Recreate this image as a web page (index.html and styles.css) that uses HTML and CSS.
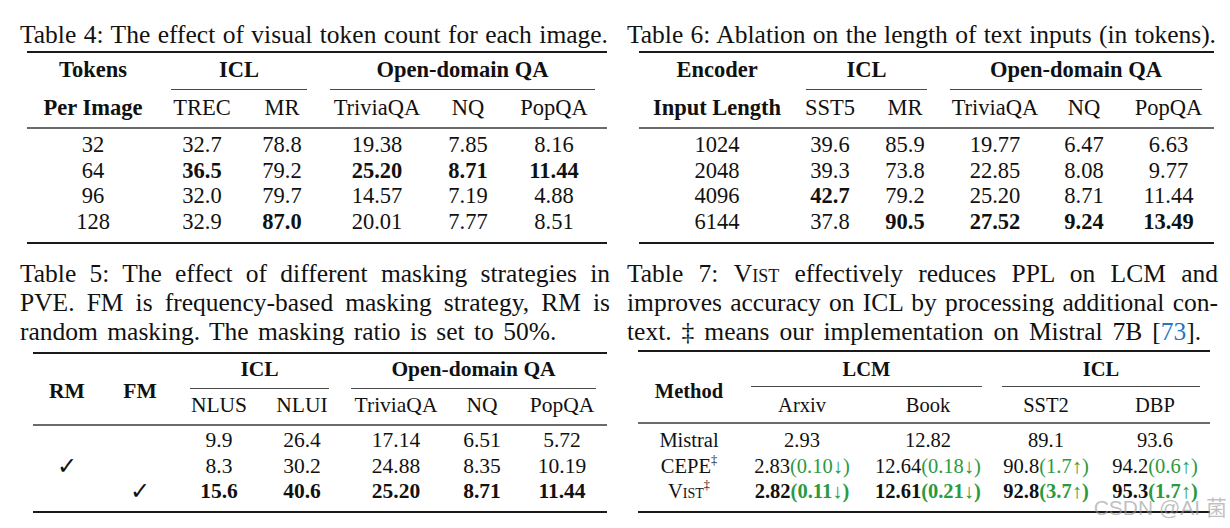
FILE: index.html
```html
<!DOCTYPE html>
<html lang="en">
<head>
<meta charset="utf-8">
<title>Tables 4–7</title>
<link rel="stylesheet" href="styles.css">
</head>
<body>
<main class="page">
  <section class="col col-left">
    <figure class="fig fig4">
      <p class="cap one">Table 4: The effect of visual token count for each image.</p>
      <table class="tbl tbl-a t4">
        <colgroup><col><col><col><col><col><col></colgroup>
        <thead>
          <tr class="r1">
            <th>Tokens</th>
            <th colspan="2"><span class="cmid c4a">ICL</span></th>
            <th colspan="3"><span class="cmid c4b">Open-domain QA</span></th>
          </tr>
          <tr class="r2">
            <th>Per Image</th>
            <th class="n">TREC</th><th class="n">MR</th>
            <th class="n">TriviaQA</th><th class="n">NQ</th><th class="n">PopQA</th>
          </tr>
        </thead>
        <tbody>
          <tr><td>32</td><td>32.7</td><td>78.8</td><td>19.38</td><td>7.85</td><td>8.16</td></tr>
          <tr><td>64</td><td><b>36.5</b></td><td>79.2</td><td><b>25.20</b></td><td><b>8.71</b></td><td><b>11.44</b></td></tr>
          <tr><td>96</td><td>32.0</td><td>79.7</td><td>14.57</td><td>7.19</td><td>4.88</td></tr>
          <tr><td>128</td><td>32.9</td><td><b>87.0</b></td><td>20.01</td><td>7.77</td><td>8.51</td></tr>
        </tbody>
      </table>
    </figure>

    <figure class="fig fig5">
      <div class="cap multi">
        <span class="ln">Table 5: The effect of different masking strategies in</span>
        <span class="ln">PVE. FM is frequency-based masking strategy, RM is</span>
        <span class="ln last">random masking. The masking ratio is set to 50%.</span>
      </div>
      <table class="tbl tbl-b t5">
        <colgroup><col><col><col><col><col><col><col></colgroup>
        <thead>
          <tr class="r1">
            <th rowspan="2" class="span2">RM</th>
            <th rowspan="2" class="span2">FM</th>
            <th colspan="2"><span class="cmid c5a">ICL</span></th>
            <th colspan="3"><span class="cmid c5b">Open-domain QA</span></th>
          </tr>
          <tr class="r2">
            <th class="n">NLUS</th><th class="n">NLUI</th>
            <th class="n">TriviaQA</th><th class="n">NQ</th><th class="n">PopQA</th>
          </tr>
        </thead>
        <tbody>
          <tr><td></td><td></td><td>9.9</td><td>26.4</td><td>17.14</td><td>6.51</td><td>5.72</td></tr>
          <tr><td class="chk">✓</td><td></td><td>8.3</td><td>30.2</td><td>24.88</td><td>8.35</td><td>10.19</td></tr>
          <tr><td></td><td class="chk">✓</td><td><b>15.6</b></td><td><b>40.6</b></td><td><b>25.20</b></td><td><b>8.71</b></td><td><b>11.44</b></td></tr>
        </tbody>
      </table>
    </figure>
  </section>

  <section class="col col-right">
    <figure class="fig fig6">
      <p class="cap one">Table 6: Ablation on the length of text inputs (in tokens).</p>
      <table class="tbl tbl-a t6">
        <colgroup><col><col><col><col><col><col></colgroup>
        <thead>
          <tr class="r1">
            <th>Encoder</th>
            <th colspan="2"><span class="cmid c6a">ICL</span></th>
            <th colspan="3"><span class="cmid c6b">Open-domain QA</span></th>
          </tr>
          <tr class="r2">
            <th>Input Length</th>
            <th class="n">SST5</th><th class="n">MR</th>
            <th class="n">TriviaQA</th><th class="n">NQ</th><th class="n">PopQA</th>
          </tr>
        </thead>
        <tbody>
          <tr><td>1024</td><td>39.6</td><td>85.9</td><td>19.77</td><td>6.47</td><td>6.63</td></tr>
          <tr><td>2048</td><td>39.3</td><td>73.8</td><td>22.85</td><td>8.08</td><td>9.77</td></tr>
          <tr><td>4096</td><td><b>42.7</b></td><td>79.2</td><td>25.20</td><td>8.71</td><td>11.44</td></tr>
          <tr><td>6144</td><td>37.8</td><td><b>90.5</b></td><td><b>27.52</b></td><td><b>9.24</b></td><td><b>13.49</b></td></tr>
        </tbody>
      </table>
    </figure>

    <figure class="fig fig7">
      <div class="cap multi">
        <span class="ln">Table 7: <span class="sc">Vist</span> effectively reduces PPL on LCM and</span>
        <span class="ln">improves accuracy on ICL by processing additional con-</span>
        <span class="ln last wide">text. ‡ means our implementation on Mistral 7B [<a class="ref">73</a>].</span>
      </div>
      <table class="tbl tbl-c t7">
        <colgroup><col><col><col><col><col></colgroup>
        <thead>
          <tr class="r1">
            <th rowspan="2" class="span2">Method</th>
            <th colspan="2"><span class="cmid c7a">LCM</span></th>
            <th colspan="2"><span class="cmid c7b">ICL</span></th>
          </tr>
          <tr class="r2">
            <th class="n">Arxiv</th><th class="n">Book</th>
            <th class="n">SST2</th><th class="n">DBP</th>
          </tr>
        </thead>
        <tbody>
          <tr><td>Mistral</td><td>2.93</td><td>12.82</td><td>89.1</td><td>93.6</td></tr>
          <tr><td>CEPE<sup>‡</sup></td><td>2.83<span class="g">(0.10↓)</span></td><td>12.64<span class="g">(0.18↓)</span></td><td>90.8<span class="g">(1.7↑)</span></td><td>94.2<span class="g">(0.6↑)</span></td></tr>
          <tr><td><span class="sc">Vist</span><sup>‡</sup></td><td><b>2.82<span class="g">(0.11↓)</span></b></td><td><b>12.61<span class="g">(0.21↓)</span></b></td><td><b>92.8<span class="g">(3.7↑)</span></b></td><td><b>95.3<span class="g">(1.7↑)</span></b></td></tr>
        </tbody>
      </table>
    </figure>
  </section>

  <div class="wm">CSDN @AI 菌</div>
</main>
</body>
</html>
```

FILE: styles.css
```css
* { box-sizing: border-box; }

html, body {
  margin: 0;
  padding: 0;
  background: #fff;
}

body {
  font-family: "Liberation Serif", "Times New Roman", "Noto Sans CJK SC", serif;
  color: #111;
  width: 1230px;
  height: 528px;
  overflow: hidden;
}

.page {
  position: relative;
  display: grid;
  grid-template-columns: 590px 591px;
  column-gap: 17px;
  padding: 20px 0 0 20px;
  height: 528px;
}

.col {
  display: flex;
  flex-direction: column;
}

.fig {
  margin: 0;
}

/* captions */
.cap {
  margin: 0;
  font-size: 25.5px;
  line-height: 29px;
  text-align: justify;
}
.cap.one {
  text-align-last: justify;
  margin-right: 2px;
}
.cap .ln {
  display: block;
  text-align: justify;
  text-align-last: justify;
}
.cap .ln.last {
  text-align-last: left;
  word-spacing: 3px;
}
.cap .ln.last.wide {
  word-spacing: 3.6px;
}
.sc {
  font-variant: small-caps;
}
.ref {
  color: #1f77c4;
  text-decoration: none;
}

.fig5 { margin-top: 15px; }
.fig7 { margin-top: 15px; }

/* tables */
.tbl {
  border-collapse: collapse;
  table-layout: fixed;
  border-top: 2px solid #1a1a1a;
  border-bottom: 2px solid #1a1a1a;
  font-size: 22.5px;
  line-height: 25.5px;
  text-align: center;
}
.tbl thead {
  border-bottom: 2px solid #6a6a6a;
}
.tbl th, .tbl td {
  padding: 0;
  text-align: center;
  white-space: nowrap;
}
.tbl th {
  font-weight: bold;
  vertical-align: top;
}
.tbl th.n {
  font-weight: normal;
}
.tbl th.span2 {
  vertical-align: middle;
}
.tbl b {
  font-weight: bold;
}
.cmid {
  display: block;
  border-bottom: 1px solid #4a4a4a;
}
.g {
  color: #2b9a3e;
}
sup {
  font-size: 0.6em;
  line-height: 0;
  vertical-align: 0.7em;
}
.chk {
  font-family: "DejaVu Sans", sans-serif;
  font-size: 24px;
  font-weight: bold;
}

/* Table A : tables 4 and 6 */
.tbl-a { margin-top: 2px; }
.tbl-a .r1 th { padding-top: 4px; padding-bottom: 7.5px; }
.tbl-a .r1 th .cmid { padding-bottom: 6.5px; margin-bottom: -7.5px; }
.tbl-a .r2 th { padding-top: 5px; padding-bottom: 6.5px; }
.tbl-a tbody tr:first-child td { padding-top: 3px; }
.tbl-a tbody tr:last-child td { padding-bottom: 8px; }

/* Table B : table 5 */
.tbl-b { margin-top: 6px; font-size: 21.5px; }
.tbl-b .r1 th { padding-top: 3px; }
.tbl-b .r1 th .cmid { padding-bottom: 5.5px; }
.tbl-b .r2 th { padding-top: 4px; padding-bottom: 5.5px; }
.tbl-b th.span2 { padding-top: 6px; padding-bottom: 0; }
.tbl-b tbody tr:first-child td { padding-top: 2px; }
.tbl-b tbody tr:last-child td { padding-bottom: 6.5px; }

/* Table C : table 7 */
.tbl-c { margin-top: 4px; font-size: 20.5px; }
.tbl-c .r1 th { padding-top: 5px; }
.tbl-c .r1 th .cmid { padding-bottom: 3.5px; }
.tbl-c .r2 th { padding-top: 6px; padding-bottom: 3.5px; }
.tbl-c th.span2 { padding-top: 10px; padding-bottom: 0; }
.tbl-c tbody tr:first-child td { padding-top: 4px; }
.tbl-c tbody tr:last-child td { padding-bottom: 6.5px; }

/* Table 4 geometry */
.t4 { width: 580px; margin-left: 7px; }
.t4 col:nth-child(1) { width: 132px; }
.t4 col:nth-child(2) { width: 86px; }
.t4 col:nth-child(3) { width: 74px; }
.t4 col:nth-child(4) { width: 116px; }
.t4 col:nth-child(5) { width: 66px; }
.t4 col:nth-child(6) { width: 106px; }
.c4a { margin: 0 12px; }
.c4b { margin: 0 12px 0 11px; }

/* Table 5 geometry */
.t5 { width: 574px; margin-left: 13px; }
.t5 col:nth-child(1) { width: 68px; }
.t5 col:nth-child(2) { width: 78px; }
.t5 col:nth-child(3) { width: 80px; }
.t5 col:nth-child(4) { width: 86px; }
.t5 col:nth-child(5) { width: 102px; }
.t5 col:nth-child(6) { width: 70px; }
.t5 col:nth-child(7) { width: 90px; }
.c5a { margin: 0 16px 0 11px; }
.c5b { margin: 0 11px 0 6px; }

/* Table 6 geometry */
.t6 { width: 575px; margin-left: 12px; }
.t6 col:nth-child(1) { width: 156px; }
.t6 col:nth-child(2) { width: 70px; }
.t6 col:nth-child(3) { width: 80px; }
.t6 col:nth-child(4) { width: 100px; }
.t6 col:nth-child(5) { width: 78px; }
.t6 col:nth-child(6) { width: 91px; }
.c6a { margin: 0 18px 0 11px; }
.c6b { margin: 0 12px 0 5px; }

/* Table 7 geometry */
.t7 { width: 572px; margin-left: 11px; }
.t7 col:nth-child(1) { width: 102px; }
.t7 col:nth-child(2) { width: 124px; }
.t7 col:nth-child(3) { width: 128px; }
.t7 col:nth-child(4) { width: 108px; }
.t7 col:nth-child(5) { width: 110px; }
.c7a { margin: 0 10px 0 11px; }
.c7b { margin: 0 10px; }

/* watermark overlay */
.wm {
  position: absolute;
  right: 3px;
  top: 495px;
  font-family: "Liberation Sans", "Noto Sans CJK SC", sans-serif;
  font-size: 21px;
  line-height: 26px;
  color: rgba(150, 150, 150, 0.6);
  white-space: nowrap;
}
```
